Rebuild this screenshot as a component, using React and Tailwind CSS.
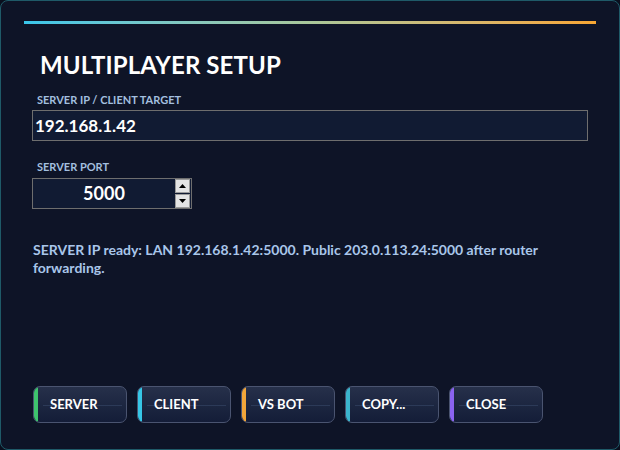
const buttons = [
  { label: 'SERVER', bar: 'bg-[#3ec46d]' },
  { label: 'CLIENT', bar: 'bg-[#36c6e6]' },
  { label: 'VS BOT', bar: 'bg-[#f2a63a]' },
  { label: 'COPY...', bar: 'bg-[#3bb4cc]' },
  { label: 'CLOSE', bar: 'bg-[#8a63f0]' },
];

export default function App() {
  return (
    <div className="w-[620px] h-[450px] bg-[#0a0f1e] font-['Lato','Liberation_Sans',sans-serif]">
      <div className="w-full h-full flex flex-col rounded-[8px] border border-[#1f5a68] bg-[#0e1427] px-[23px] pt-[20px] pb-[26px]">
        {/* accent bar */}
        <div className="h-[3px] w-full bg-gradient-to-r from-[#38c6ea] via-[#a9c79a] to-[#f7a632]" />

        <div className="px-[8px]">
          <h1 className="mt-[27px] ml-[8px] text-[24px] leading-[28px] font-bold text-white tracking-[0.1px]">
            MULTIPLAYER SETUP
          </h1>

          <div className="mt-[14px] ml-[5px] text-[11px] leading-[14px] font-bold text-[#a3bfdf]">
            SERVER IP / CLIENT TARGET
          </div>
          <div className="mt-[3px] h-[31px] border border-[#6e6e6e] bg-[#111b33] flex items-center px-[2px]">
            <span className="text-[17px] font-bold text-white">192.168.1.42</span>
          </div>

          <div className="mt-[19px] ml-[5px] text-[11px] leading-[14px] font-bold text-[#a3bfdf]">
            SERVER PORT
          </div>
          <div className="mt-[4px] w-[160px] h-[31px] border border-[#6e6e6e] bg-[#111b33] flex items-center">
            <span className="flex-1 text-center text-[18px] font-bold text-white">5000</span>
            <div className="flex flex-col gap-[1px] mr-[1px]">
              <div className="w-[15px] h-[14px] bg-[#e4e4e4] border border-[#9a9a9a] flex items-center justify-center">
                <svg width="7" height="4" viewBox="0 0 7 4"><path d="M3.5 0L7 4H0z" fill="#000" /></svg>
              </div>
              <div className="w-[15px] h-[14px] bg-[#e4e4e4] border border-[#9a9a9a] flex items-center justify-center">
                <svg width="7" height="4" viewBox="0 0 7 4"><path d="M0 0h7L3.5 4z" fill="#000" /></svg>
              </div>
            </div>
          </div>

          <p className="mt-[32px] ml-[1px] max-w-[540px] text-[14px] leading-[18px] font-bold text-[#a9c6ea]">
            SERVER IP ready: LAN 192.168.1.42:5000. Public 203.0.113.24:5000 after router forwarding.
          </p>
        </div>

        <div className="mt-auto px-[9px] flex gap-[10px]">
          {buttons.map((b) => (
            <div
              key={b.label}
              className="relative w-[94px] h-[37px] rounded-[7px] border border-[#4a5470] bg-gradient-to-b from-[#26304a] to-[#141d38] overflow-hidden flex items-center"
            >
              <div className="absolute left-[9px] right-[4px] top-1/2 h-px bg-[#2c3a58]" />
              <div className={`absolute left-0 top-0 bottom-0 w-[4px] ${b.bar}`} />
              <span className="relative ml-[16px] text-[13px] font-bold text-white">{b.label}</span>
            </div>
          ))}
        </div>
      </div>
    </div>
  );
}
